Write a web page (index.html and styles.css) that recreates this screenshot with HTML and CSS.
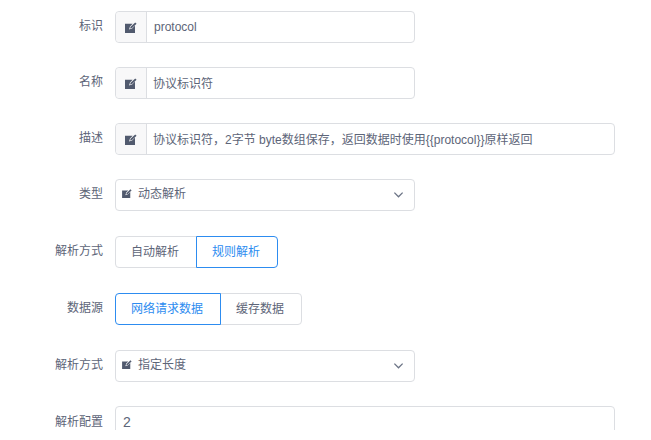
FILE: index.html
```html
<!DOCTYPE html>
<html lang="zh">
<head>
  <meta charset="UTF-8">
  <title>协议标识符</title>
  <link rel="stylesheet" href="styles.css">
</head>
<body>
  <form class="form">
    <div class="row">
      <label class="label">标识</label>
      <div class="input-group">
        <span class="prepend"><svg class="icon" viewBox="0 0 12 11"><path d="M0 1.800h7.600L5 4.400 4 7.500l3.100-1L10 3.600V11H0z"/><path d="M5 6.500 5.600 4.800 10.200.4l1.400 1.300L7 6z"/></svg></span>
        <span class="input-text">protocol</span>
      </div>
    </div>
    <div class="row">
      <label class="label">名称</label>
      <div class="input-group">
        <span class="prepend"><svg class="icon" viewBox="0 0 12 11"><path d="M0 1.800h7.600L5 4.400 4 7.500l3.100-1L10 3.600V11H0z"/><path d="M5 6.500 5.600 4.800 10.200.4l1.400 1.300L7 6z"/></svg></span>
        <span class="input-text cjk">协议标识符</span>
      </div>
    </div>
    <div class="row">
      <label class="label">描述</label>
      <div class="input-group wide">
        <span class="prepend"><svg class="icon" viewBox="0 0 12 11"><path d="M0 1.800h7.600L5 4.400 4 7.500l3.100-1L10 3.600V11H0z"/><path d="M5 6.500 5.600 4.800 10.200.4l1.400 1.300L7 6z"/></svg></span>
        <span class="input-text cjk">协议标识符，2字节 byte数组保存，返回数据时使用{{protocol}}原样返回</span>
      </div>
    </div>
    <div class="row">
      <label class="label">类型</label>
      <div class="select">
        <svg class="icon small" viewBox="0 0 12 11"><path d="M0 1.800h7.600L5 4.400 4 7.500l3.100-1L10 3.600V11H0z"/><path d="M5 6.500 5.600 4.800 10.200.4l1.400 1.300L7 6z"/></svg>
        <span class="select-text">动态解析</span>
        <svg class="arrow" viewBox="0 0 12 12"><path d="M1.500 4 6 8.500 10.500 4"/></svg>
      </div>
    </div>
    <div class="row tall">
      <label class="label">解析方式</label>
      <div class="radio-group">
        <span class="radio">自动解析</span>
        <span class="radio active">规则解析</span>
      </div>
    </div>
    <div class="row tall">
      <label class="label">数据源</label>
      <div class="radio-group">
        <span class="radio active">网络请求数据</span>
        <span class="radio">缓存数据</span>
      </div>
    </div>
    <div class="row tall">
      <label class="label">解析方式</label>
      <div class="select">
        <svg class="icon small" viewBox="0 0 12 11"><path d="M0 1.800h7.600L5 4.400 4 7.500l3.100-1L10 3.600V11H0z"/><path d="M5 6.500 5.600 4.800 10.200.4l1.400 1.300L7 6z"/></svg>
        <span class="select-text">指定长度</span>
        <svg class="arrow" viewBox="0 0 12 12"><path d="M1.500 4 6 8.500 10.500 4"/></svg>
      </div>
    </div>
    <div class="row">
      <label class="label last">解析配置</label>
      <div class="textarea">2</div>
    </div>
  </form>
</body>
</html>
```

FILE: styles.css
```css
html, body {
  margin: 0;
  padding: 0;
  background-color: #fff;
  color: #5d6578;
  font-family: "Liberation Sans", "Noto Sans CJK SC", sans-serif;
  font-size: 12px;
}

.form {
  height: 430px;
  padding-top: 11px;
  box-sizing: border-box;
  overflow: hidden;
  display: flex;
  flex-direction: column;
  gap: 24px;
}

.row {
  display: flex;
  flex: none;
}

.row.tall {
  margin-top: 1px;
}

.label {
  width: 103px;
  margin-right: 12px;
  flex: none;
  text-align: right;
  line-height: 30px;
}

.label.last {
  line-height: 32px;
}

.input-group {
  width: 300px;
  height: 32px;
  box-sizing: border-box;
  display: flex;
  border: 1px solid #dcdee2;
  border-radius: 4px;
}

.input-group.wide {
  width: 500px;
}

.prepend {
  width: 30px;
  flex: none;
  display: flex;
  align-items: center;
  justify-content: center;
  background-color: #f8f8f9;
  border-right: 1px solid #dcdee2;
  border-radius: 4px 0 0 4px;
}

.input-text {
  padding-left: 7px;
  line-height: 30px;
}

.input-text.cjk {
  padding-left: 6px;
  line-height: 32px;
}

.icon {
  width: 12px;
  height: 11px;
  fill: #515a6e;
}

.icon.small {
  width: 10px;
  height: 9px;
  margin-top: -3px;
  flex: none;
}

.select {
  width: 300px;
  height: 32px;
  box-sizing: border-box;
  display: flex;
  align-items: center;
  padding: 0 10px 0 6px;
  border: 1px solid #dcdee2;
  border-radius: 4px;
}

.select-text {
  margin-left: 6px;
  flex: 1;
  line-height: 28px;
  height: 30px;
}

.arrow {
  width: 11px;
  height: 11px;
  margin-top: -1px;
  fill: none;
  stroke: #6b7385;
  stroke-width: 1.4;
}

.radio-group {
  display: flex;
}

.radio {
  height: 32px;
  box-sizing: border-box;
  padding: 0 17px 0 15px;
  line-height: 30px;
  border: 1px solid #dcdee2;
  margin-left: -1px;
}

.radio:first-child {
  margin-left: 0;
  border-radius: 4px 0 0 4px;
}

.radio:last-child {
  border-radius: 0 4px 4px 0;
}

.radio.active {
  color: #2d8cf0;
  border-color: #2d8cf0;
  position: relative;
}

.textarea {
  width: 500px;
  height: 52px;
  box-sizing: border-box;
  padding: 5px 7px;
  border: 1px solid #dcdee2;
  border-radius: 4px;
  font-size: 14px;
  line-height: 20px;
}
```
